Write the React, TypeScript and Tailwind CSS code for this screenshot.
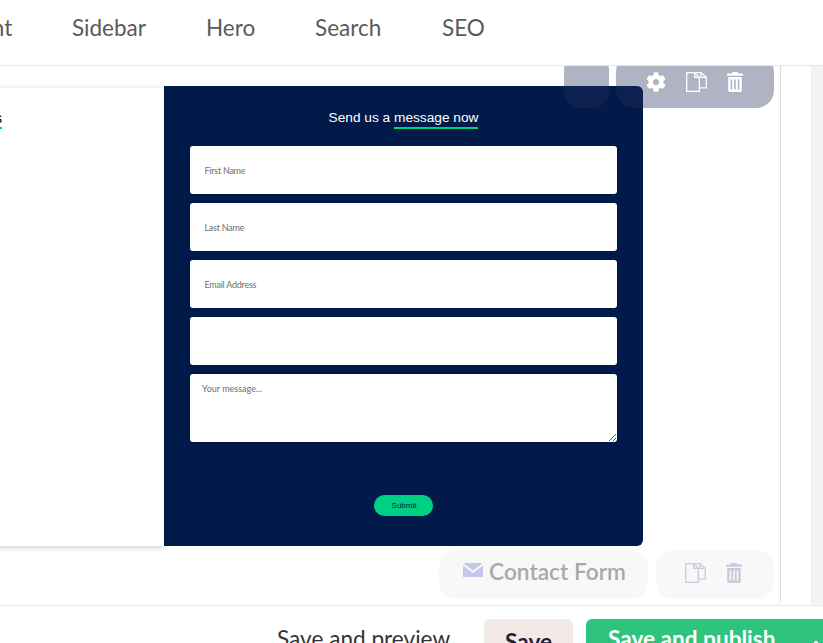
import { FaCog } from "react-icons/fa";

const tabs = [
  { label: "Content", width: "w-[140px]" },
  { label: "Sidebar", width: "w-[134px]" },
  { label: "Hero", width: "w-[109px]" },
  { label: "Search", width: "w-[127px]" },
  { label: "SEO", width: "w-auto" },
];

function CopyIcon({ className }: { className: string }) {
  return (
    <svg viewBox="0 0 21 20" fill="none" stroke="currentColor" strokeWidth="1.3" className={className}>
      <path d="M.7.7h8l4.6 4.6v14H.7z" />
      <path d="M8.7.7v4.6h4.6" />
      <path d="M9.5.7h5.5l5.3 4.6v10.6h-7" />
      <path d="M15 .7v4.6h5.3" />
    </svg>
  );
}

function TrashIcon({ className }: { className: string }) {
  return (
    <svg viewBox="0 0 16 20" fill="currentColor" className={className}>
      <path d="M5.5 0h5l.8 1.6H16v2.2H0V1.6h4.7z" />
      <path
        fillRule="evenodd"
        d="M1.2 5h13.6v13.4c0 .9-.7 1.6-1.6 1.6H2.8c-.9 0-1.6-.7-1.6-1.6zM3.6 7.6v9.8h1.6V7.6zm3.6 0v9.8h1.6V7.6zm3.6 0v9.8h1.6V7.6z"
      />
    </svg>
  );
}

function MailIcon({ className }: { className: string }) {
  return (
    <svg viewBox="0 0 20 14" fill="currentColor" className={className}>
      <path d="M0 0h20L10 7.6z" />
      <path d="M0 2.4v11.6h20V2.4L10 10z" />
    </svg>
  );
}

function Field({ placeholder }: { placeholder: string }) {
  return (
    <input
      placeholder={placeholder}
      className="h-12 w-full rounded-[3px] bg-white px-[14.5px] text-[9px] tracking-[-0.25px] outline-none placeholder:text-[#6f6f6f]"
    />
  );
}

export default function App() {
  return (
    <div className="flex h-[643px] w-[823px] flex-col overflow-hidden bg-white font-['Lato','Liberation_Sans',sans-serif]">
      <header className="h-[66px] shrink-0 overflow-hidden border-b border-[#e8e8e8]">
        <nav className="-ml-[68px] flex h-[56px] items-center text-[22.5px] text-[#5a5a5a]">
          {tabs.map((tab) => (
            <span key={tab.label} className={tab.width}>
              {tab.label}
            </span>
          ))}
        </nav>
      </header>

      <div className="flex h-[539px] shrink-0">
        <main className="relative w-[781px] shrink-0 overflow-hidden rounded-br-md border-r border-[#dcdcdc]">
          <section className="-ml-[200px] mt-5 flex h-[460px]">
            <div className="mt-px w-[364px] shrink-0 border-t border-r border-[#eef4fb] bg-white font-['Liberation_Sans',sans-serif] text-sm shadow-[0_2px_6px_rgba(0,0,0,0.18)]">
              <div className="mt-[20px] w-[202px] text-right">
                <span className="inline-block border-b-2 border-[#00d084] leading-[18px]">services</span>
              </div>
            </div>
            <div className="relative flex w-[479px] shrink-0 flex-col rounded-r-md bg-[#021a4a] px-[26px] font-['Liberation_Sans',sans-serif]">
              <h2 className="mt-[24px] text-center text-[13.7px] leading-4 text-white">
                Send us a{" "}
                <span className="inline-block border-b-2 border-[#00d084] pb-px">message now</span>
              </h2>
              <div className="mt-[17px] flex flex-col gap-[9px] font-['Lato',sans-serif]">
                <Field placeholder="First Name" />
                <Field placeholder="Last Name" />
                <Field placeholder="Email Address" />
                <Field placeholder="" />
                <textarea
                  placeholder="Your message..."
                  className="h-[68px] w-full rounded-[3px] bg-white px-3 py-2 text-[9px] outline-none placeholder:text-[#6f6f6f]"
                />
              </div>
              <button className="mx-auto mt-[53px] h-[21px] w-[59px] rounded-full bg-[#00d084] pl-px text-[8px] font-medium text-[#021a4a]">
                Submit
              </button>
            </div>
          </section>

          <div className="mt-1 flex justify-end gap-2 pr-[6px]">
            <div className="flex h-[49px] w-[209px] items-start justify-center gap-[6px] rounded-[18px] bg-[#f8f8f8] pl-[2px] pt-[6px] text-[22.7px] text-[#a9a9a9]">
              <MailIcon className="mt-[7px] h-[14px] w-5 text-[#c3c8e8]" />
              <span className="font-semibold leading-[32px]">Contact Form</span>
            </div>
            <div className="flex h-[49px] w-[118px] items-start justify-center gap-5 rounded-[18px] bg-[#f8f8f8] pr-1 pt-[13px] text-[#c9cbdb]">
              <CopyIcon className="h-5 w-[21px]" />
              <TrashIcon className="h-5 w-4" />
            </div>
          </div>

          <div className="absolute left-[564px] -top-3 h-[54px] w-[45px] rounded-[16px] bg-[#242c5b]/36" />
          <div className="absolute left-[616px] -top-3 flex h-[54px] w-[158px] items-start justify-center gap-5 rounded-[18px] bg-[#242c5b]/36 pl-px pr-[3px] pt-[18px] text-white">
            <FaCog className="h-5 w-5" />
            <CopyIcon className="h-5 w-[21px]" />
            <TrashIcon className="h-5 w-4" />
          </div>
        </main>
        <div className="w-[30px] shrink-0" />
        <div className="w-3 shrink-0 border-l border-[#eeeeee] bg-[#f5f3f3]" />
      </div>

      <footer className="flex h-[38px] shrink-0 items-start overflow-hidden border-t border-[#e8e8e8] pl-[277px] pt-[13px] text-[22.6px]">
        <span className="mt-[6px] w-[207px] shrink-0 leading-7 text-[#333333]">Save and preview</span>
        <button className="h-[40px] w-[89px] shrink-0 rounded-t-md bg-[#f3eae7] pt-[6px] text-center font-bold leading-7 text-[#1f1f45]">
          Save
        </button>
        <button className="ml-[13px] flex h-[40px] w-[260px] shrink-0 rounded-t-md bg-[#2ec47d] pl-[22px] pt-[6px] font-bold leading-7 text-white">
          Save and publish
          <svg viewBox="0 0 12 8" fill="none" stroke="currentColor" strokeWidth="2" className="ml-[34px] mt-[15px] h-2 w-3">
            <path d="M1 7l5-5 5 5" />
          </svg>
        </button>
      </footer>
    </div>
  );
}
